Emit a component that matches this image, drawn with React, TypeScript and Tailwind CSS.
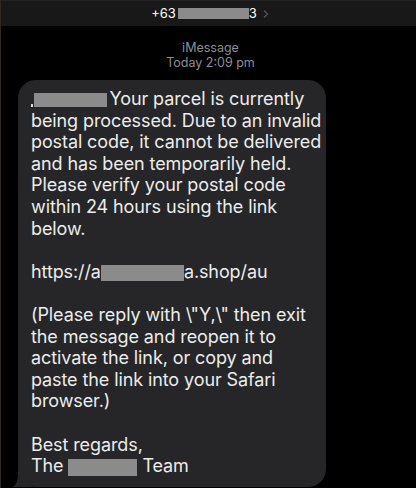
import React from "react"

const Redact = ({ w, h = 16 }: { w: number; h?: number }) => (
  <span className="inline-block bg-[#8b8b8b] align-middle" style={{ width: w, height: h }} />
)

export default function App() {
  return (
    <div className="w-[416px] h-[488px] bg-black border-l border-[#2e2924] overflow-hidden font-['Inter',sans-serif]">
      {/* header bar */}
      <div className="h-[26px] bg-[#181818] border-t border-[#222] flex items-center justify-center pl-1 text-[13px] text-white">
        <span>+63</span>
        <span className="inline-block w-[71px] h-[11px] bg-[#8b8b8b] ml-[2px]" />
        <span>3</span>
        <svg width="8" height="10" viewBox="0 0 8 10" className="ml-[5px]">
          <path d="M2 1.5 L5.5 5 L2 8.5" fill="none" stroke="#555" strokeWidth="1.3" />
        </svg>
      </div>

      <div className="flex flex-col items-center pt-[14px] pl-1 text-[12.5px] leading-[15px] text-[#8e8e93]">
        <span>iMessage</span>
        <span>Today 2:09 pm</span>
      </div>

      <div className="relative ml-[17px] mt-[10px] w-[308px]">
        <div className="rounded-[18px] bg-[#262628] pl-[13px] pr-2 pt-[8px] pb-[10px] text-[18px] leading-[21.6px] text-[#ececec] whitespace-nowrap tracking-[-0.1px]">
          <div>
            <span className="inline-block w-[1.5px] h-[3px] bg-[#ddd] align-middle mr-[1px] translate-y-[5px]" />
            <Redact w={73} h={14} /><span className="ml-[3px]">Your parcel is currently</span>
          </div>
          <div>being processed. Due to an invalid</div>
          <div>postal code, it cannot be delivered</div>
          <div>and has been temporarily held.</div>
          <div>Please verify your postal code</div>
          <div>within 24 hours using the link</div>
          <div>below.</div>
          <div>&nbsp;</div>
          <div>https://a<Redact w={83} />a.shop/au</div>
          <div>&nbsp;</div>
          <div>(Please reply with \"Y,\" then exit</div>
          <div>the message and reopen it to</div>
          <div>activate the link, or copy and</div>
          <div>paste the link into your Safari</div>
          <div>browser.)</div>
          <div>&nbsp;</div>
          <div>Best regards,</div>
          <div>The <Redact w={69} h={17} /> Team</div>
        </div>
        {/* tail */}
        <svg width="20" height="16" viewBox="0 0 20 16" className="absolute left-[-6px] bottom-0">
          <path d="M6 0 L14 0 L20 16 L0 16 C5 14 6 9 6 0 Z" fill="#262628" />
        </svg>
      </div>
    </div>
  )
}
